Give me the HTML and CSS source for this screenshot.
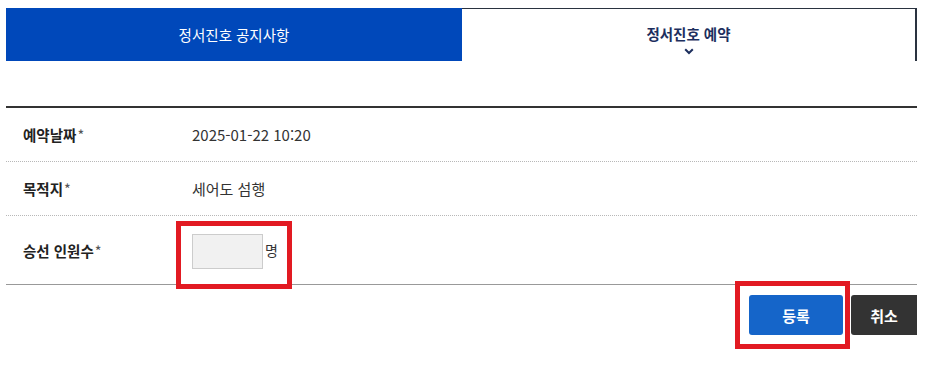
FILE: index.html
```html
<!DOCTYPE html>
<html lang="ko">
<head>
<meta charset="utf-8">
<link rel="stylesheet" href="styles.css">
</head>
<body>
<div class="page">
  <div class="tabs">
    <div class="tab tab-active">정서진호 공지사항</div>
    <div class="tab tab-current">
      <span class="tab-title">정서진호 예약</span>
      <svg class="chev" width="10" height="7" viewBox="0 0 10 7"><path d="M1.2 1.2 L5 5 L8.8 1.2" fill="none" stroke="#1d2f5e" stroke-width="2"/></svg>
    </div>
  </div>
  <div class="form">
    <div class="row">
      <div class="label">예약날짜<span class="req">*</span></div>
      <div class="value">2025-01-22 10:20</div>
    </div>
    <div class="row">
      <div class="label">목적지<span class="req">*</span></div>
      <div class="value">세어도 섬행</div>
    </div>
    <div class="row row-last">
      <div class="label">승선 인원수<span class="req">*</span></div>
      <div class="value">
        <div class="input-wrap">
          <input class="num" type="text">
          <span class="unit">명</span>
          <span class="mark mark-input"></span>
        </div>
      </div>
    </div>
  </div>
  <div class="actions">
    <div class="btn-wrap">
      <button class="btn btn-primary">등록</button>
      <span class="mark mark-btn"></span>
    </div>
    <button class="btn btn-dark">취소</button>
  </div>
</div>
</body>
</html>
```
FILE: styles.css
```css
* { box-sizing: border-box; }
html, body { margin: 0; padding: 0; background: #fff; }
body {
  font-family: "Noto Sans CJK KR", "Noto Sans", sans-serif;
  color: #333;
}
.page {
  width: 911px;
  min-height: 379px;
  margin-left: 6px;
  padding-top: 8px;
}
.tabs {
  display: flex;
  height: 53px;
}
.tab {
  flex: 1;
  display: flex;
  flex-direction: column;
  align-items: center;
  justify-content: center;
  font-size: 14.5px;
}
.tab-active {
  background: #0048ba;
  color: #fff;
  flex: 0 0 456px;
  padding-bottom: 1px;
}
.tab-current {
  border-top: 1px solid #2a3340;
  border-right: 2px solid #2a3340;
  color: #1d2f5e;
  font-weight: 700;
  padding-top: 9px;
}
.tab-title { line-height: 18px; }
.chev { display: block; margin-top: 5px; }
.form {
  margin-top: 45px;
  border-top: 2px solid #333;
}
.row {
  display: flex;
  align-items: center;
  height: 54px;
  border-bottom: 1px dotted #b8b8b8;
}
.row-last {
  height: 69px;
  border-bottom: 1px solid #999;
}
.label {
  width: 186px;
  padding-left: 17px;
  font-size: 14.5px;
  font-weight: 700;
  color: #222;
}
.req {
  font-weight: 400;
  color: #555;
  margin-left: 1px;
}
.value {
  font-size: 15px;
  color: #333;
}
.input-wrap {
  position: relative;
  display: flex;
  align-items: center;
  margin-top: 2px;
}
.num {
  width: 71px;
  height: 35px;
  margin: 0;
  padding: 0;
  background: #f1f1f1;
  border: 1px solid #ccc;
  font: inherit;
}
.unit {
  margin-left: 2px;
  font-size: 14px;
  margin-top: -3px;
}
.mark {
  position: absolute;
  border: 5px solid #e21a22;
  pointer-events: none;
}
.mark-input {
  left: -16px;
  top: -13px;
  width: 116px;
  height: 68px;
}
.actions {
  display: flex;
  justify-content: flex-end;
  gap: 8px;
  margin-top: 10px;
}
.btn-wrap { position: relative; }
.btn {
  height: 40px;
  border: none;
  border-radius: 3px;
  font-family: inherit;
  font-size: 15px;
  font-weight: 700;
  color: #fff;
  margin: 0;
  padding: 0;
}
.btn-primary {
  width: 94px;
  background: #1565c9;
  display: block;
}
.btn-dark {
  width: 66px;
  background: #333;
  border-radius: 3px 0 0 3px;
}
.mark-btn {
  left: -14px;
  top: -14px;
  width: 115px;
  height: 68px;
}
```
